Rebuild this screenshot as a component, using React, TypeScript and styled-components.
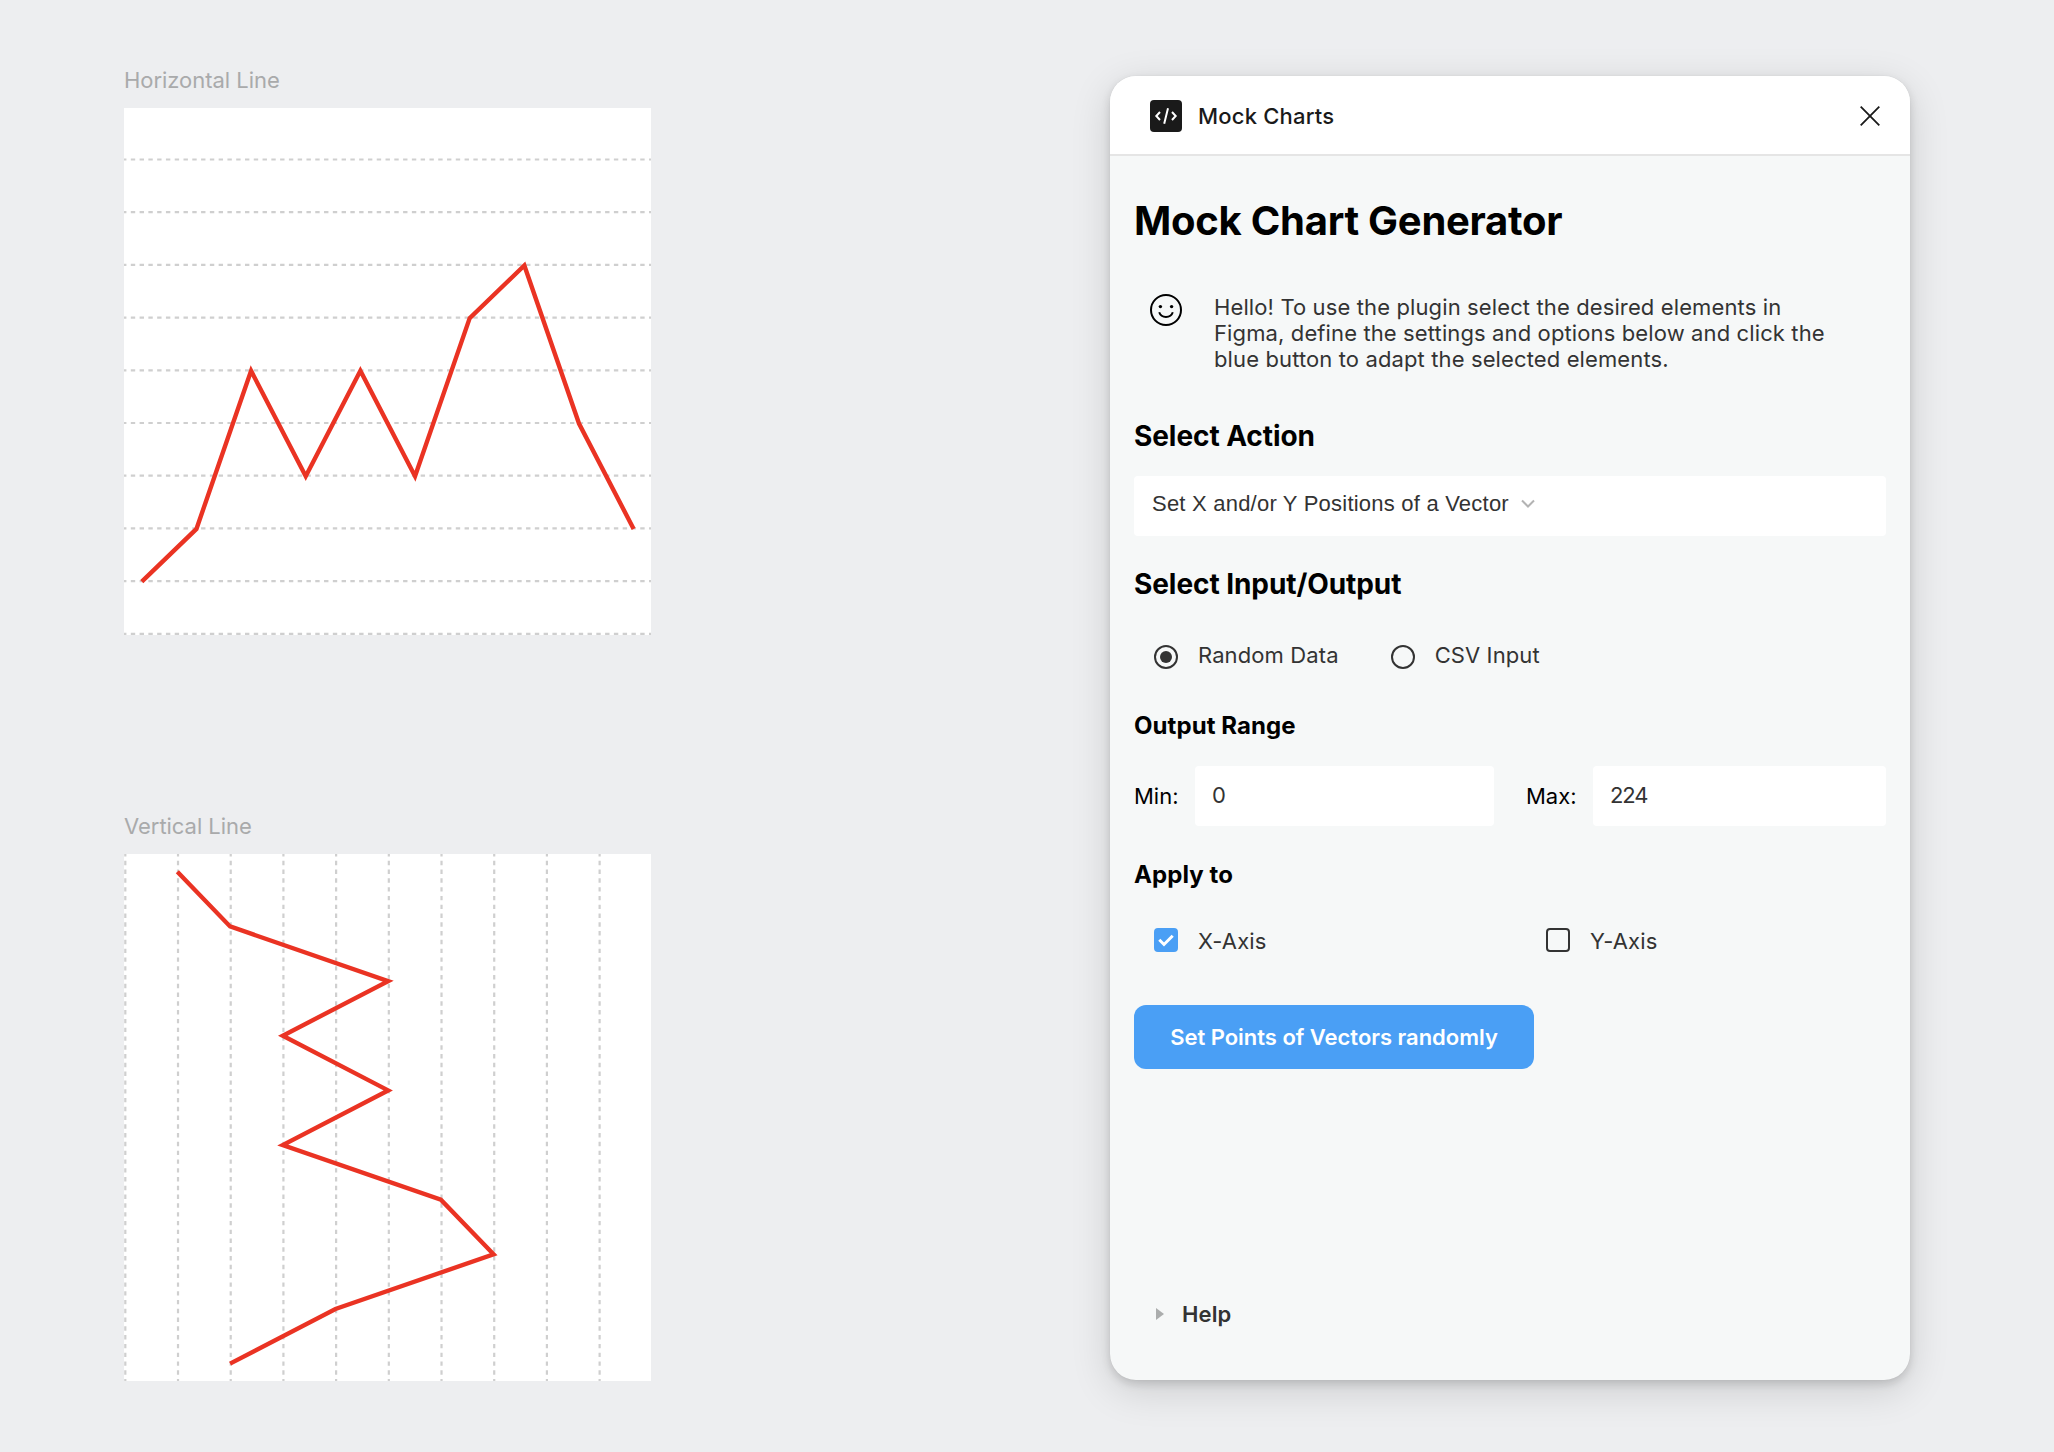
import React from "react";
import styled, { createGlobalStyle } from "styled-components";

const GlobalStyle = createGlobalStyle`
  * { box-sizing: border-box; }
  body { margin: 0; background: #edeef0; font-family: Inter, "Liberation Sans", sans-serif; }
  h1, h2, h3, p { margin: 0; }
`;

const Page = styled.div`
  display: flex;
  justify-content: space-between;
  align-items: flex-start;
  height: 1452px;
  padding: 66px 144px 0 124px;
  background: #edeef0;
`;
const Charts = styled.div`
  display: flex;
  flex-direction: column;
  gap: 177px;
`;
const Frame = styled.section`
  display: flex;
  flex-direction: column;
  gap: 14px;
`;
const FrameLabel = styled.div`
  height: 28px;
  line-height: 28px;
  font-size: 22px;
  letter-spacing: -0.04px;
  color: #a9aaab;
`;
const Canvas = styled.svg`
  display: block;
  width: 527px;
  height: 527px;
  background: #fff;
`;

const Dialog = styled.main`
  width: 800px;
  height: 1304px;
  margin: 10px 0 0;
  border-radius: 26px;
  overflow: hidden;
  background: #f6f8f8;
  box-shadow: 0 10px 40px rgba(0, 0, 0, 0.14), 0 4px 10px rgba(0, 0, 0, 0.14), 0 0 1px rgba(0, 0, 0, 0.12);
`;
const TitleBar = styled.header`
  display: flex;
  align-items: center;
  height: 80px;
  padding: 2px 30px 0 40px;
  background: #fff;
  border-bottom: 2px solid #e5e5e5;
`;
const PluginName = styled.div`
  flex: 1;
  margin-left: 16px;
  font-size: 22px;
  font-weight: 500;
  letter-spacing: 0.2px;
  color: #1a1a1a;
`;
const Body = styled.div`
  display: flex;
  flex-direction: column;
  padding: 0 24px;
`;
const Heading = styled.h1`
  margin-top: 40px;
  line-height: 50px;
  font-size: 40px;
  font-weight: 700;
  letter-spacing: -0.26px;
  color: #000;
`;
const Section = styled.h2<{ $top: number }>`
  margin-top: ${(p) => p.$top}px;
  line-height: 36px;
  font-size: 28px;
  font-weight: 700;
  letter-spacing: -0.07px;
  color: #000;
`;
const SubSection = styled.h3<{ $top: number }>`
  margin-top: ${(p) => p.$top}px;
  line-height: 30px;
  font-size: 24px;
  font-weight: 700;
  letter-spacing: 0.08px;
  color: #000;
`;
const Intro = styled.div`
  display: flex;
  gap: 32px;
  margin-top: 48px;
  padding-left: 16px;
`;
const IntroText = styled.p`
  line-height: 26px;
  font-size: 22px;
  letter-spacing: 0.12px;
  color: #333;
`;
const SmileIcon = styled.svg`
  flex: none;
`;
const Select = styled.div`
  display: flex;
  align-items: center;
  gap: 12px;
  height: 60px;
  margin-top: 22px;
  padding: 0 18px 5px;
  border-radius: 4px;
  background: #fff;
  font-family: "Liberation Sans", Arial, sans-serif;
  font-size: 22px;
  color: #333;
`;
const SelectText = styled.span`
  letter-spacing: 0.22px;
`;
const Radios = styled.div`
  display: flex;
  gap: 52px;
  margin-top: 39px;
  padding-left: 20px;
`;
const Choice = styled.label`
  display: flex;
  align-items: center;
  gap: 20px;
  height: 28px;
  font-size: 22px;
  letter-spacing: 0.11px;
  color: #333;
`;
const RadioDot = styled.span<{ $on?: boolean }>`
  display: grid;
  place-items: center;
  width: 24px;
  height: 24px;
  margin-top: 4px;
  border: 2px solid #333;
  border-radius: 50%;
  &::after {
    content: "";
    width: 12px;
    height: 12px;
    border-radius: 50%;
    background: ${(p) => (p.$on ? "#333" : "transparent")};
  }
`;
const CheckBox = styled.span<{ $on?: boolean }>`
  display: grid;
  place-items: center;
  width: 24px;
  height: 24px;
  margin-bottom: 2px;
  border: 2px solid ${(p) => (p.$on ? "#4a9ff5" : "#333")};
  border-radius: 4px;
  background: ${(p) => (p.$on ? "#4a9ff5" : "transparent")};
`;
const RangeRow = styled.div`
  display: flex;
  align-items: center;
  height: 60px;
  margin-top: 25px;
`;
const RangeLabel = styled.span<{ $width: number }>`
  width: ${(p) => p.$width}px;
  padding-bottom: 1px;
  font-size: 22px;
  color: #000;
`;
const Field = styled.div<{ $width: number }>`
  width: ${(p) => p.$width}px;
  height: 60px;
  padding: 0 17px;
  line-height: 59px;
  border-radius: 4px;
  background: #fff;
  font-size: 22px;
  letter-spacing: -1.1px;
  color: #333;
  & + span { margin-left: 32px; }
`;
const Checks = styled.div`
  display: grid;
  grid-template-columns: 392px 1fr;
  margin-top: 37px;
  padding-left: 20px;
`;
const PrimaryButton = styled.button`
  width: 400px;
  height: 64px;
  margin-top: 50px;
  padding: 0;
  border: 0;
  border-radius: 12px;
  background: #4a9ff5;
  font-family: inherit;
  font-size: 22px;
  font-weight: 600;
  letter-spacing: -0.02px;
  color: #fff;
`;
const Help = styled.div`
  display: flex;
  align-items: center;
  gap: 18px;
  height: 28px;
  margin-top: 231px;
  padding-left: 22px;
  font-size: 22px;
  font-weight: 600;
  letter-spacing: 0.11px;
  color: #333;
`;

const values = [1, 2, 5, 3, 5, 3, 6, 7, 4, 2];
const along = (i: number) => 8.1 + (i * 224) / 9;

function Chart({ vertical }: { vertical?: boolean }) {
  const points = values
    .map((v, i) => (vertical ? `${24 * v + 0.3},${along(i)}` : `${along(i)},${239.7 - 24 * v}`))
    .join(" ");
  return (
    <Canvas viewBox="0 0 240 240">
      {values.map((_, i) => {
        const at = vertical ? 0.6 + 24 * i : 23.45 + 24 * i;
        return (
          <line
            key={i}
            x1={vertical ? at : 0}
            x2={vertical ? at : 240}
            y1={vertical ? 0 : at}
            y2={vertical ? 240 : at}
            stroke="#cfcfcf"
            strokeWidth="1"
            strokeDasharray="2 2"
            strokeDashoffset="0.9"
          />
        );
      })}
      <polyline points={points} fill="none" stroke="#ea3323" strokeWidth="2" />
    </Canvas>
  );
}

export default function App() {
  return (
    <Page>
      <GlobalStyle />
      <Charts>
        <Frame>
          <FrameLabel>Horizontal Line</FrameLabel>
          <Chart />
        </Frame>
        <Frame>
          <FrameLabel>Vertical Line</FrameLabel>
          <Chart vertical />
        </Frame>
      </Charts>
      <Dialog>
        <TitleBar>
          <svg width="32" height="32" viewBox="0 0 32 32" fill="none">
            <rect width="32" height="32" rx="4" fill="#1a1a1a" />
            <path d="M10 12 6.300 16l3.700 4M22 12l3.700 4-3.700 4M18 8.200 14.200 23.800" stroke="#fff" strokeWidth="2" />
          </svg>
          <PluginName>Mock Charts</PluginName>
          <svg width="20" height="20" viewBox="0 0 20 20" fill="none">
            <path d="M.7.7l18.600 18.600M19.300.7.7 19.300" stroke="#1a1a1a" strokeWidth="1.8" />
          </svg>
        </TitleBar>
        <Body>
          <Heading>Mock Chart Generator</Heading>
          <Intro>
            <SmileIcon width="32" height="32" viewBox="0 0 32 32" fill="none">
              <circle cx="16" cy="16" r="15" stroke="#000" strokeWidth="2" />
              <circle cx="10.400" cy="12.600" r="1.700" fill="#000" />
              <circle cx="21.600" cy="12.600" r="1.700" fill="#000" />
              <path d="M9.200 18.300c1 3 3.600 4.700 6.800 4.700s5.800-1.700 6.800-4.700" stroke="#000" strokeWidth="2" />
            </SmileIcon>
            <IntroText>
              Hello! To use the plugin select the desired elements in
              <br />
              Figma, define the settings and options below and click the
              <br />
              blue button to adapt the selected elements.
            </IntroText>
          </Intro>
          <Section $top={46}>Select Action</Section>
          <Select>
            <SelectText>Set X and/or Y Positions of a Vector</SelectText>
            <svg width="14" height="9" viewBox="0 0 14 9" fill="none">
              <path d="M1 1.500l6 6 6-6" stroke="#b3b3b3" strokeWidth="2" />
            </svg>
          </Select>
          <Section $top={30}>Select Input/Output</Section>
          <Radios>
            <Choice>
              <RadioDot $on />
              Random Data
            </Choice>
            <Choice>
              <RadioDot />
              CSV Input
            </Choice>
          </Radios>
          <SubSection $top={42}>Output Range</SubSection>
          <RangeRow>
            <RangeLabel $width={61}>Min:</RangeLabel>
            <Field $width={299}>0</Field>
            <RangeLabel $width={67}>Max:</RangeLabel>
            <Field $width={293}>224</Field>
          </RangeRow>
          <SubSection $top={34}>Apply to</SubSection>
          <Checks>
            <Choice>
              <CheckBox $on>
                <svg width="16" height="13" viewBox="0 0 16 13" fill="none">
                  <path d="M1.300 5.800 6 10.500 14.700 1.800" stroke="#fff" strokeWidth="3" />
                </svg>
              </CheckBox>
              X-Axis
            </Choice>
            <Choice>
              <CheckBox />
              Y-Axis
            </Choice>
          </Checks>
          <PrimaryButton>Set Points of Vectors randomly</PrimaryButton>
          <Help>
            <svg width="8" height="12" viewBox="0 0 8 12">
              <path d="M0 0l8 6-8 6z" fill="#abadad" />
            </svg>
            Help
          </Help>
        </Body>
      </Dialog>
    </Page>
  );
}
